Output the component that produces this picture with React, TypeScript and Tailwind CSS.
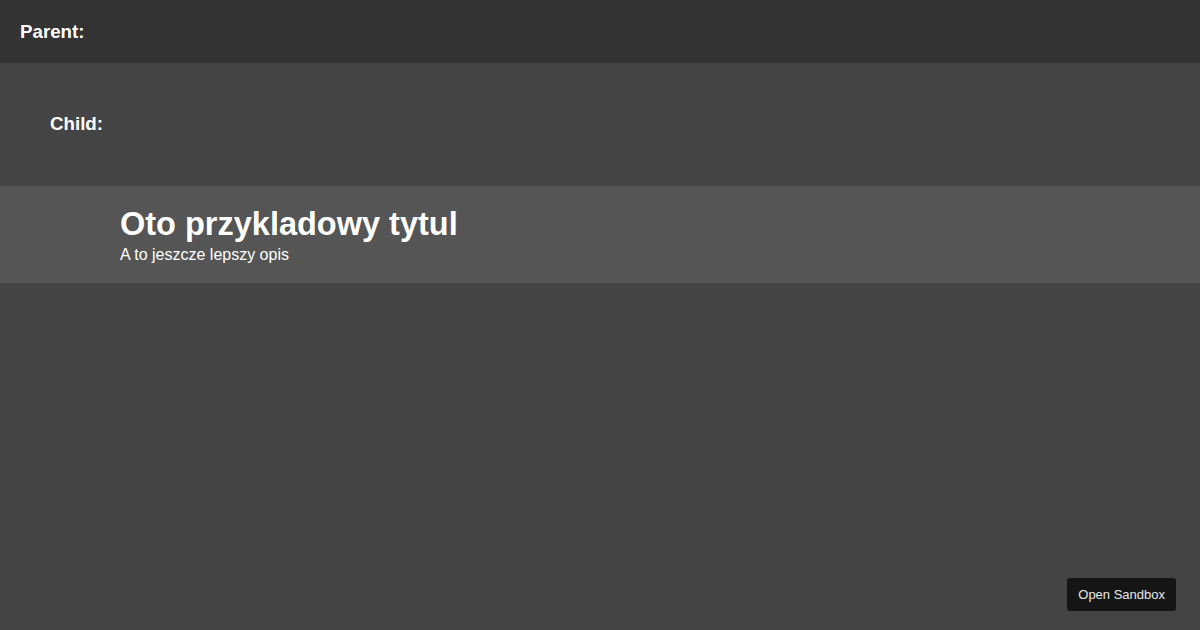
export default function App() {
  return (
    <div
      className="w-[1200px] h-[630px] bg-[#444444] text-white relative overflow-hidden"
      style={{ fontFamily: '"Liberation Sans", Arial, sans-serif' }}
    >
      <div className="h-[63px] bg-[#333333] pl-5 pt-[21px]">
        <h3 className="text-[18.72px] font-bold leading-[normal]">Parent:</h3>
      </div>
      <div className="h-[123px] pl-[50px] pt-[50px]">
        <h3 className="text-[18.72px] font-bold leading-[normal]">Child:</h3>
      </div>
      <div className="h-[97px] bg-[#555555] pl-[120px] pt-[20px]">
        <h1 className="text-[32.5px] font-bold leading-[normal]">Oto przykladowy tytul</h1>
        <p className="text-[16px] leading-[normal] mt-[3px]">A to jeszcze lepszy opis</p>
      </div>
      <button className="absolute right-6 bottom-[19px] h-[33px] px-[11px] rounded-[3px] bg-[#151515] text-[#e8e8e8] text-[13px] leading-[normal]">
        Open Sandbox
      </button>
    </div>
  );
}
